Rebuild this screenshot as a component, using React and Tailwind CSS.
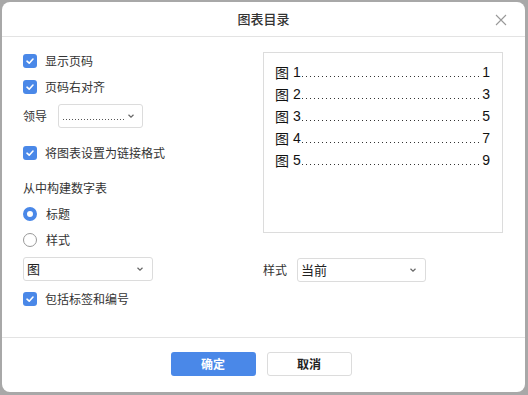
import React from 'react';

const font = { fontFamily: '"Noto Sans CJK SC", "Noto Sans", sans-serif' };

function Check({ label }) {
  return (
    <div className="flex items-center h-[26px]">
      <span className="w-[14px] h-[14px] rounded-[3px] bg-[#4a88e8] flex items-center justify-center">
        <svg width="10" height="10" viewBox="0 0 10 10">
          <path d="M2 5.2 L4.2 7.2 L8 3" fill="none" stroke="#fff" strokeWidth="1.6" strokeLinecap="round" strokeLinejoin="round" />
        </svg>
      </span>
      <span className="ml-[8px] text-[12px] text-[#333]">{label}</span>
    </div>
  );
}

function Radio({ label, checked }) {
  return (
    <div className="flex items-center h-[26px]">
      {checked ? (
        <span className="w-[14px] h-[14px] rounded-full border-[4px] border-[#4a88e8] bg-white" />
      ) : (
        <span className="w-[14px] h-[14px] rounded-full border border-[#999] bg-white" />
      )}
      <span className="ml-[9px] text-[12px] text-[#333]">{label}</span>
    </div>
  );
}

function Chevron() {
  return (
    <svg width="8" height="6" viewBox="0 0 8 6">
      <path d="M1.5 1.8 L4 4.2 L6.5 1.8" fill="none" stroke="#666" strokeWidth="1.2" />
    </svg>
  );
}

function Select({ width, children }) {
  return (
    <div
      className="h-[24px] rounded-[3px] border border-[#dcdcdc] bg-white flex items-center justify-between pl-[3px] pr-[8px]"
      style={{ width }}
    >
      <span className="text-[13px] text-[#222] whitespace-nowrap">{children}</span>
      <Chevron />
    </div>
  );
}

const entries = [
  ['1', '1'],
  ['2', '3'],
  ['3', '5'],
  ['4', '7'],
  ['5', '9'],
];

export default function App() {
  return (
    <div className="w-[528px] h-[395px] bg-[#a8a8a8] pt-[2px] pl-[2px] pr-[3px] pb-[3px]" style={font}>
      <div className="w-full h-full bg-white rounded-[8px] flex flex-col">
        {/* header */}
        <div className="relative h-[35px] border-b border-[#e3e3e3] flex items-center justify-center">
          <span className="text-[13px] font-medium text-[#333]">图表目录</span>
          <svg className="absolute right-[18px] top-[12px]" width="12" height="12" viewBox="0 0 12 12">
            <path d="M1 1 L11 11 M11 1 L1 11" stroke="#999" strokeWidth="1.1" />
          </svg>
        </div>

        {/* body */}
        <div className="flex-1 flex pl-[21px] pt-[11px]">
          <div className="w-[240px] flex flex-col">
            <Check label="显示页码" />
            <Check label="页码右对齐" />
            <div className="flex items-center mt-[4px] h-[24px]">
              <span className="text-[12px] text-[#333] w-[35px]">领导</span>
              <div className="w-[85px] h-[24px] rounded-[3px] border border-[#dcdcdc] flex items-center justify-between pl-[4px] pr-[7px]">
                <span className="w-[63px] h-[1px] mt-[6px] bg-[linear-gradient(to_right,#555_1px,transparent_1px)] bg-[length:3px_1px]" />
                <Chevron />
              </div>
            </div>
            <div className="mt-[12px]">
              <Check label="将图表设置为链接格式" />
            </div>
            <div className="mt-[9px] h-[26px] flex items-center text-[12px] text-[#333]">从中构建数字表</div>
            <Radio label="标题" checked />
            <Radio label="样式" />
            <div className="mt-[4px]">
              <Select width={130}>图</Select>
            </div>
            <div className="mt-[5px]">
              <Check label="包括标签和编号" />
            </div>
          </div>

          <div className="flex flex-col">
            <div className="mt-[4px] w-[240px] h-[181px] border border-[#dcdcdc] pt-[8px] pl-[11px] pr-[12px]">
              {entries.map(([n, p]) => (
                <div key={n} className="flex h-[22px] items-center text-[14px] text-[#111]" style={{ fontFamily: '"Liberation Sans", "Noto Sans CJK SC", sans-serif' }}>
                  <span className="whitespace-nowrap" style={font}>图</span>
                  <span className="ml-[4px]">{n}</span>
                  <span className="flex-1 h-[1px] self-end mb-[6px] ml-[1px] mr-[1px] bg-[linear-gradient(to_right,#333_1px,transparent_1px)] bg-[length:4px_1px]" />
                  <span>{p}</span>
                </div>
              ))}
            </div>
            <div className="mt-[25px] flex items-center">
              <span className="text-[12px] text-[#333] w-[34px]">样式</span>
              <Select width={129}>当前</Select>
            </div>
          </div>
        </div>

        {/* footer */}
        <div className="h-[55px] border-t border-[#e3e3e3] flex justify-center gap-[11px] pt-[14px] pr-[5px]">
          <button className="w-[85px] h-[24px] rounded-[3px] bg-[#4a88e8] text-white text-[12px] font-bold">确定</button>
          <button className="w-[85px] h-[24px] rounded-[3px] border border-[#dcdcdc] bg-white text-[#222] text-[12px] font-bold">取消</button>
        </div>
      </div>
    </div>
  );
}
